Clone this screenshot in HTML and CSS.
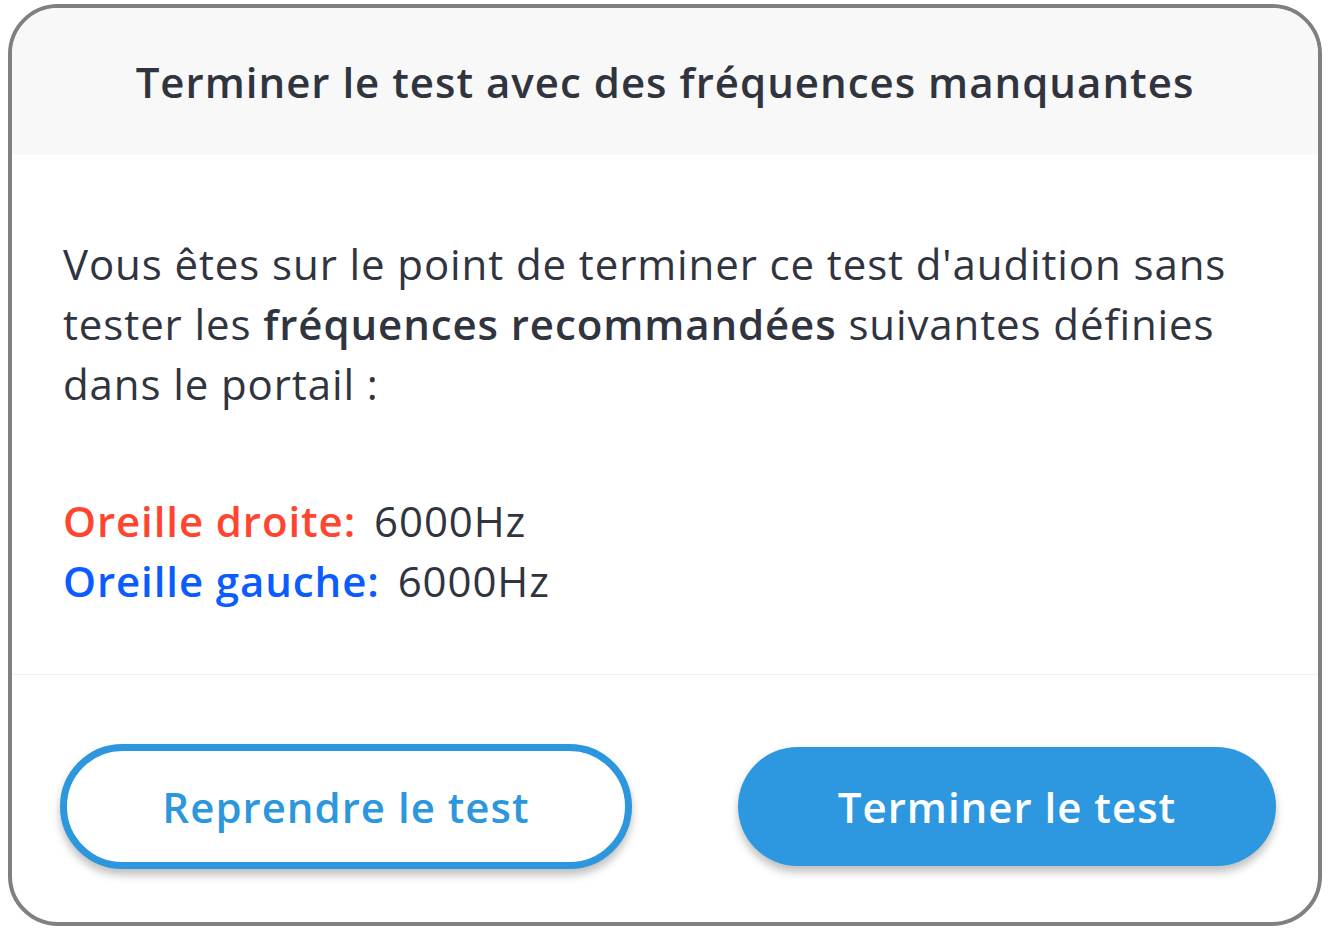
FILE: index.html
```html
<!DOCTYPE html>
<html lang="fr">
<head>
    <meta charset="UTF-8">
    <title>Terminer le test</title>
    <link rel="stylesheet" href="styles.css">
</head>
<body>

    <div class="dialog">
        <div class="dialog-header">
            <h1>Terminer le test avec des fréquences manquantes</h1>
        </div>

        <div class="dialog-body">
            <p class="message">
                Vous êtes sur le point de terminer ce test d'audition sans
                tester les <strong>fréquences recommandées</strong> suivantes définies
                dans le portail :
            </p>

            <div class="freq-list">
                <div class="freq-row">
                    <span class="ear right">Oreille droite:</span>
                    <span class="freq">6000Hz</span>
                </div>
                <div class="freq-row">
                    <span class="ear left">Oreille gauche:</span>
                    <span class="freq">6000Hz</span>
                </div>
            </div>
        </div>

        <div class="dialog-footer">
            <button class="btn btn-outline">Reprendre le test</button>
            <button class="btn btn-primary">Terminer le test</button>
        </div>
    </div>

</body>
</html>
```

FILE: styles.css
```css
body {
    margin: 0;
    padding: 4px 13px 7px 8px;
    background-color: #fff;
    font-family: "Open Sans", "Noto Sans", sans-serif;
    color: #30343f;
}
.dialog {
    height: 922px;
    box-sizing: border-box;
    border: 4px solid #808080;
    border-radius: 50px;
    overflow: hidden;
    display: flex;
    flex-direction: column;
    background-color: #fff;
}
.dialog-header {
    height: 147px;
    background-color: #f8f8f8;
    display: flex;
    align-items: center;
    justify-content: center;
}
.dialog-header h1 {
    margin: 0;
    font-size: 42px;
    font-weight: 600;
    letter-spacing: 1px;
    color: #30343f;
}
.dialog-body {
    height: 520px;
    box-sizing: border-box;
    padding: 79px 48px 0 51px;
    border-bottom: 1px solid #f2f2f2;
    font-size: 42px;
    letter-spacing: 0.9px;
    line-height: 60px;
}
.message {
    margin: 0 0 77px 0;
}
.message strong {
    font-weight: 600;
}
.freq-row {
    display: flex;
    gap: 18px;
}
.ear {
    font-weight: 600;
}
.ear.right {
    color: #ff4530;
}
.ear.left {
    color: #0a5cff;
}
.dialog-footer {
    flex: 1;
    display: flex;
    align-items: center;
    justify-content: space-between;
    padding: 16px 42px 0 48px;
}
.btn {
    font-family: "Open Sans", "Noto Sans", sans-serif;
    font-size: 42px;
    font-weight: 600;
    letter-spacing: 1px;
    border-radius: 70px;
    cursor: pointer;
    box-shadow: 0 6px 8px rgba(0, 0, 0, 0.25);
}
.btn-outline {
    width: 572px;
    height: 125px;
    background-color: #fff;
    color: #2d97dd;
    border: 7px solid #2d97dd;
}
.btn-primary {
    width: 538px;
    height: 119px;
    background-color: #2d98df;
    color: #fff;
    border: none;
}
```
